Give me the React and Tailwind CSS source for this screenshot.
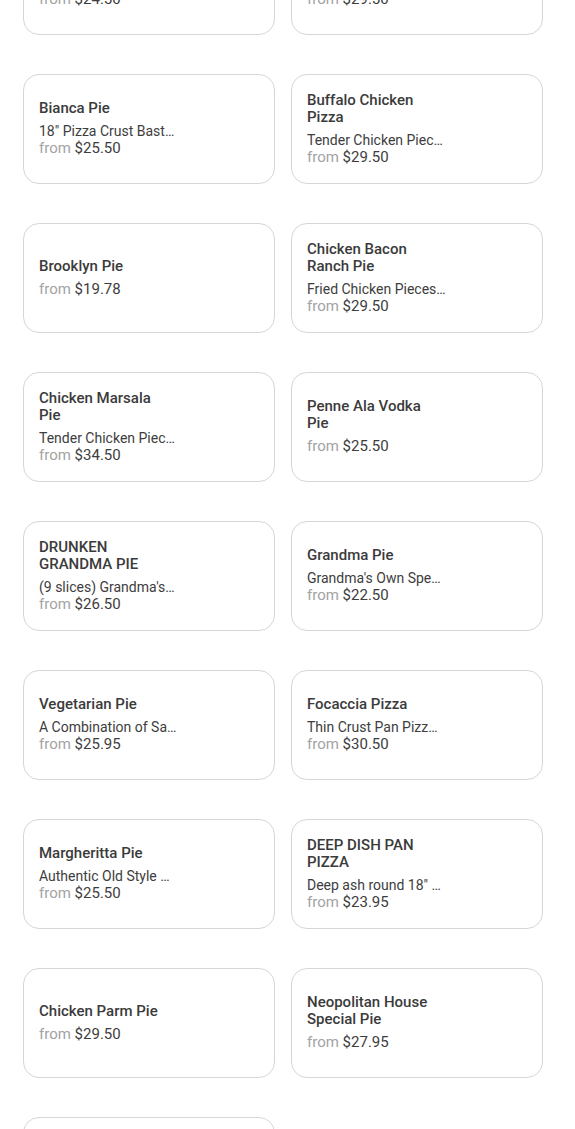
const items = [
  { t: "Sicilian Pie", d: "Thick Square Crust W…", p: "$24.50" },
  { t: "Baked Ziti Pie", d: "Penne Pasta Baked …", p: "$29.50" },
  { t: "Bianca Pie", d: "18\" Pizza Crust Bast…", p: "$25.50" },
  { t: "Buffalo Chicken Pizza", d: "Tender Chicken Piec…", p: "$29.50" },
  { t: "Brooklyn Pie", d: null, p: "$19.78" },
  { t: "Chicken Bacon Ranch Pie", d: "Fried Chicken Pieces…", p: "$29.50" },
  { t: "Chicken Marsala Pie", d: "Tender Chicken Piec…", p: "$34.50" },
  { t: "Penne Ala Vodka Pie", d: null, p: "$25.50" },
  { t: "DRUNKEN GRANDMA PIE", d: "(9 slices) Grandma's…", p: "$26.50" },
  { t: "Grandma Pie", d: "Grandma's Own Spe…", p: "$22.50" },
  { t: "Vegetarian Pie", d: "A Combination of Sa…", p: "$25.95" },
  { t: "Focaccia Pizza", d: "Thin Crust Pan Pizz…", p: "$30.50" },
  { t: "Margheritta Pie", d: "Authentic Old Style …", p: "$25.50" },
  { t: "DEEP DISH PAN PIZZA", d: "Deep ash round 18\" …", p: "$23.95" },
  { t: "Chicken Parm Pie", d: null, p: "$29.50" },
  { t: "Neopolitan House Special Pie", d: null, p: "$27.95" },
  { t: "Eggplant Parm Pie", d: "Breaded Eggplant Sl…", p: "$28.50" },
];

function Card({ t, d, p }) {
  return (
    <div className="h-[110px] rounded-2xl border border-[#d6d6d6] bg-white flex items-center pl-[15px] pb-[1px]">
      <div className="w-[136px] flex flex-col">
        <div className="text-[15px] leading-[17px] font-medium text-[#3b3b3b] mb-[6px]">{t}</div>
        {d && (
          <div className="text-[14px] leading-[17px] text-[#3d3d3d] whitespace-nowrap">{d}</div>
        )}
        <div className="text-[15px] leading-[17px] text-[#3d3d3d] whitespace-nowrap">
          <span className="text-[#a3a3a3]">from </span>
          {p}
        </div>
      </div>
    </div>
  );
}

export default function App() {
  return (
    <div
      className="w-[575px] h-[1129px] overflow-hidden bg-white"
      style={{ fontFamily: "Roboto, 'Liberation Sans', sans-serif" }}
    >
      <div className="-mt-[75px] pl-[23px] pr-[32px] grid grid-cols-2 gap-x-4 gap-y-[39px]">
        {items.map((it, i) => (
          <Card key={i} {...it} />
        ))}
      </div>
    </div>
  );
}
